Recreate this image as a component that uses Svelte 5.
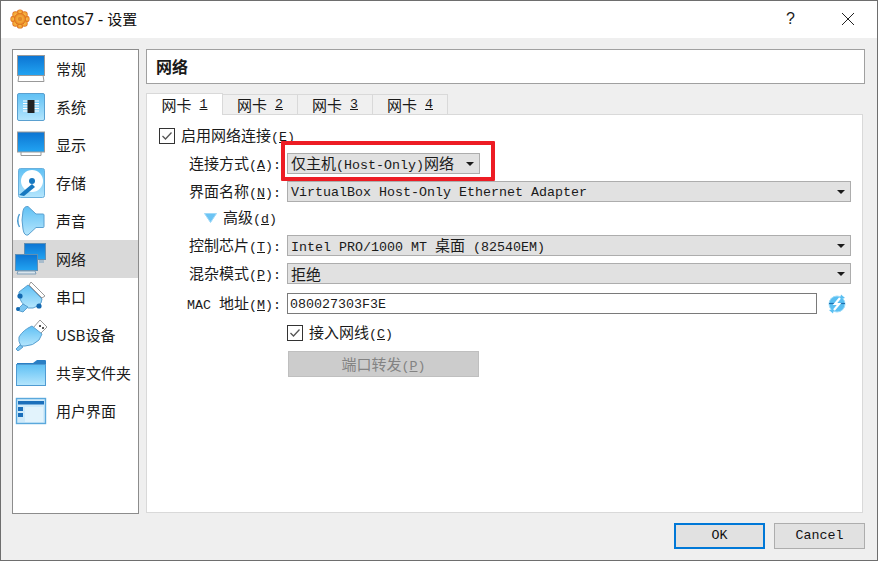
<script>
  const side = ['常规','系统','显示','存储','声音','网络','串口','USB设备','共享文件夹','用户界面'];
  const tabs = ['1','2','3','4'];
  const dy = [2,2,2.5,1,0,0,0,0,0,2];
</script>

{#snippet lab(cjk, key, tail)}<span>{cjk}</span><span class="lat">(<u>{key}</u>){tail}</span>{/snippet}
{#snippet arrow()}<i class="arrow"></i>{/snippet}
{#snippet check()}<svg class="cb" width="16" height="16" viewBox="0 0 16 16"><rect x="0.5" y="0.5" width="15" height="15" fill="#fff" stroke="#333"/><path d="M3.5 8 L6.5 11 L12.5 4.5" fill="none" stroke="#555" stroke-width="1.3"/></svg>{/snippet}

{#snippet icon(i)}
  <svg class="ico" width="32" height="32" viewBox="0 0 32 32">
    <g transform="translate(0,{dy[i]})">
    {#if i === 0}
      <path d="M4 20h24l1 6.5H3z" fill="#fff" stroke="#999"/>
      <rect x="2.5" y="0.5" width="27" height="20" fill="url(#scr)" stroke="#9a9a9a"/>
    {:else if i === 1}
      <rect x="2.5" y="0.5" width="27" height="27" rx="1.5" fill="url(#lb)" stroke="#5aa0d0"/>
      <path d="M8 8h5M8 10.5h5M8 13h5M8 15.5h5M8 18h5M19 8h5M19 10.5h5M19 13h5M19 15.5h5M19 18h5" stroke="#fff" stroke-width="1"/>
      <rect x="12.5" y="7" width="7" height="13" fill="#222"/>
    {:else if i === 2}
      <path d="M6 19h20v5H6z" fill="#fff" stroke="#999"/>
      <rect x="2.5" y="0.5" width="27" height="20" fill="url(#scr)" stroke="#9a9a9a"/>
    {:else if i === 3}
      <rect x="3.5" y="0.5" width="26" height="29" rx="2" fill="url(#lb)" stroke="#6ab0dc"/>
      <circle cx="17" cy="13" r="11" fill="#fff"/>
      <circle cx="17" cy="13" r="3" fill="#1778c0"/>
      <path d="M4 27 L17 16 L20 19 L9 28 Z" fill="#1778c0"/>
    {:else if i === 4}
      <path d="M13 1.5 Q9 1 8 6 Q6 15 8 24 Q9 31 13 30 L21 22.5 H28 q1 0 1-1 V10 q0-1-1-1 H21 Z" fill="url(#lb)" stroke="#5aa0d0"/>
      <path d="M4.5 9q-3.5 6.500 0 13" fill="none" stroke="#4a9ad0" stroke-width="1.4"/>
    {:else if i === 5}
      <rect x="9.500" y="0.500" width="21" height="16" fill="url(#scr)" stroke="#5f8fb4"/>
      <path d="M24 17h5v3h-5z" fill="#a8bccc"/>
      <rect x="0.500" y="11.500" width="22" height="16" fill="url(#scr)" stroke="#5f8fb4"/>
      <path d="M3 28h17l1 3H2z" fill="#d9e4ec" stroke="#7f9fb8"/>
    {:else if i === 6}
      <path d="M16 1 L30 15 L27 17 L14 4 Z" fill="#fff" stroke="#999"/>
      <path d="M13 4 L27 18 L26 22 Q22 26 18 27 L13 27 Q5 22 4 14 L4 11 Z" fill="url(#lb)" stroke="#5aa0d0"/>
      <path d="M8 23 L2 29 L8 31 L13 26 Z" fill="#7cc6f2" stroke="#5aa0d0"/>
      <circle cx="5" cy="15" r="2.6" fill="#1268b0"/><circle cx="24" cy="25" r="2.6" fill="#1268b0"/><circle cx="3" cy="28" r="2" fill="#1268b0"/>
    {:else if i === 7}
      <path d="M18 9 L25 1 L32 8 L25 15 Z" fill="#fff" stroke="#999"/>
      <rect x="24" y="6" width="2" height="2" fill="#555"/><rect x="27" y="8" width="2" height="2" fill="#555"/>
      <path d="M17 7 L27 15 L24 21 Q18 27 10 27 L6 27 Q3 22 4 18 Q8 11 17 7Z" fill="url(#lb)" stroke="#5aa0d0"/>
      <path d="M5 26 L1 30 L3 32 L8 28Z" fill="#7cc6f2" stroke="#5aa0d0"/>
    {:else if i === 8}
      <path d="M2 6h16l4-3h8q1 0 1 1v4H2z" fill="#2a7fc4"/>
      <rect x="1.500" y="7.500" width="29" height="21" fill="url(#lb)" stroke="#4f9bd2"/>
    {:else}
      <rect x="1.500" y="1.500" width="29" height="25" fill="#cfeafa" stroke="#5aa8dc" stroke-width="1.4"/>
      <rect x="3" y="4" width="26" height="3.500" fill="#1b6fbb"/>
      <rect x="3" y="10" width="5" height="4" fill="#1b6fbb"/><rect x="3" y="16" width="5" height="4" fill="#1b6fbb"/>
      <rect x="10" y="10" width="18" height="15" fill="#e2f3fc"/>
    {/if}
    </g>
  </svg>
{/snippet}

<svg class="defs" width="0" height="0">
  <defs>
    <linearGradient id="scr" x1="0" y1="0" x2="0" y2="1"><stop offset="0" stop-color="#0c74d2"/><stop offset="1" stop-color="#22a4f2"/></linearGradient>
    <linearGradient id="lb" x1="0" y1="0" x2="0" y2="1"><stop offset="0" stop-color="#5fc0f4"/><stop offset="1" stop-color="#b5e6fd"/></linearGradient>
    <radialGradient id="fl"><stop offset="0" stop-color="#f9c04c"/><stop offset="0.7" stop-color="#ef9a2e"/><stop offset="1" stop-color="#d9671c"/></radialGradient>
  </defs>
</svg>

<div class="window">
  <header class="titlebar">
    <svg class="logo" width="20" height="20" viewBox="0 0 20 20">
      <g fill="url(#fl)">
        <circle cx="10" cy="3.600" r="3.200"/><circle cx="10" cy="16.400" r="3.200"/><circle cx="3.600" cy="10" r="3.200"/><circle cx="16.400" cy="10" r="3.200"/>
        <circle cx="5.500" cy="5.500" r="3.200"/><circle cx="14.500" cy="5.500" r="3.200"/><circle cx="5.500" cy="14.500" r="3.200"/><circle cx="14.500" cy="14.500" r="3.200"/>
        <circle cx="10" cy="10" r="6"/>
      </g>
      <circle cx="10" cy="10" r="2.200" fill="#e0892a"/>
    </svg>
    <span class="wtitle"><span class="wl">centos7 -{' '}</span>设置</span>
    <span class="help">?</span>
    <svg class="close" width="12" height="12" viewBox="0 0 12 12"><path d="M0 0L12 12M12 0L0 12" stroke="#222" stroke-width="1"/></svg>
  </header>

  <div class="body">
    <nav class="sidebar">
      {#each side as s, i}
        <div class="item" class:sel={i === 5}>
          {@render icon(i)}
          <span>{s}</span>
        </div>
      {/each}
    </nav>

    <main class="main">
      <div class="heading">网络</div>
      <div class="tabs">
        {#each tabs as t, i}
          <div class="tab" class:on={i === 0}><span>网卡</span><span class="lat">{' '}<u>{t}</u></span></div>
        {/each}
      </div>
      <section class="panel">
        <div class="enable">
          {@render check()}
          <span>启用网络连接<span class="lat">(<u>E</u>)</span></span>
        </div>
        <div class="form">
          <div class="row r1">
            <div class="lbl">{@render lab('连接方式','A',':')}</div>
            <div class="mark">
              <div class="combo short"><span class="txt">仅主机<span class="lat">(Host-Only)</span>网络</span>{@render arrow()}</div>
            </div>
          </div>
          <div class="row r2">
            <div class="lbl">{@render lab('界面名称','N',':')}</div>
            <div class="combo"><span class="txt lat">VirtualBox Host-Only Ethernet Adapter</span>{@render arrow()}</div>
          </div>
          <div class="adv">
            <svg width="13" height="10" viewBox="0 0 13 10"><path d="M0.500 0.500H12.500L6.500 9.500Z" fill="#6cc4f4" stroke="#9fd9f8"/></svg>
            <span>高级<span class="lat">(<u>d</u>)</span></span>
          </div>
          <div class="row r3">
            <div class="lbl">{@render lab('控制芯片','T',':')}</div>
            <div class="combo"><span class="txt"><span class="lat">Intel PRO/1000 MT{' '}</span>桌面<span class="lat">{' '}(82540EM)</span></span>{@render arrow()}</div>
          </div>
          <div class="row r4">
            <div class="lbl">{@render lab('混杂模式','P',':')}</div>
            <div class="combo"><span class="txt">拒绝</span>{@render arrow()}</div>
          </div>
          <div class="row r5">
            <div class="lbl"><span class="lat">MAC{' '}</span><span>地址</span><span class="lat">(<u>M</u>):</span></div>
            <div class="field lat">080027303F3E</div>
            <svg class="refresh" width="20" height="20" viewBox="0 0 20 20">
              <circle cx="10" cy="10" r="8" fill="#59bff2" stroke="#9fdcf9"/>
              <path d="M14 0.500L18 4L13 5Z" fill="#59bff2"/>
              <path d="M6 19.500L2 16L7 15Z" fill="#59bff2"/>
              <path d="M2 9.500H18" stroke="#1d6fae" stroke-width="1.200"/>
              <path d="M13 4L8 10H12L7 16" fill="none" stroke="#fff" stroke-width="2.200"/>
            </svg>
          </div>
          <div class="cable">
            {@render check()}
            <span>接入网线<span class="lat">(<u>C</u>)</span></span>
          </div>
          <div class="pf">端口转发<span class="lat">(<u>P</u>)</span></div>
        </div>
      </section>
    </main>
  </div>

  <footer class="foot">
    <div class="btn ok lat">OK</div>
    <div class="btn lat">Cancel</div>
  </footer>
</div>

<style>
  :global(body) { margin: 0; }
  .defs { position: absolute; }
  .window {
    box-sizing: border-box; width: 878px; height: 561px;
    border: 1px solid #6e6e6e; background: #efefef;
    display: flex; flex-direction: column; overflow: hidden;
    font-family: "Noto Sans CJK SC", sans-serif; font-size: 15px; color: #1a1a1a;
  }
  .lat { font-family: "Liberation Mono", monospace; font-size: 13.33px; white-space: pre; }
  u { text-decoration: underline; }
  svg { display: block; flex: none; }

  .titlebar { height: 37px; flex: none; background: #fff; display: flex; align-items: center; padding: 0 23px 2px 9px; box-sizing: border-box; }
  .wtitle { margin-left: 5px; font-size: 15px; color: #111; white-space: pre; }
  .wl { font-family: "Noto Sans", sans-serif; font-size: 16px; }
  .help { margin-left: auto; font-size: 16px; line-height: 20px; padding-top: 1px; font-family: "Liberation Sans", sans-serif; margin-right: 47px; }

  .body { flex: 1; min-height: 0; display: flex; padding: 11px 12px 0 11px; gap: 7px; }
  .sidebar { box-sizing: border-box; width: 127px; height: 465px; border: 1px solid #8c8c8c; background: #fff; flex: none; }
  .item { height: 38px; display: flex; align-items: center; padding-left: 2px; gap: 9px; line-height: 20px; white-space: nowrap; }
  .item.sel { background: #d9d9d9; }

  .main { flex: 1; min-width: 0; display: flex; flex-direction: column; }
  .heading { box-sizing: border-box; height: 35px; flex: none; background: #fff; border: 1px solid #a0a0a0; padding-left: 9px; line-height: 33px; font-weight: 700; font-size: 16px; }
  .tabs { display: flex; margin-top: 9px; height: 22px; flex: none; align-items: flex-start; position: relative; z-index: 1; margin-bottom: -1px; }
  .tab { box-sizing: border-box; height: 21px; margin-top: 1px; width: 75px; border: 1px solid #d9d9d9; border-left: 0; background: #f0f0f0; display: flex; justify-content: center; align-items: center; line-height: 18px; }
  .tab.on { height: 22px; margin-top: 0; width: 77px; background: #fff; border-left: 1px solid #d9d9d9; border-bottom: 0; }
  .panel { box-sizing: border-box; width: 717px; height: 399px; background: #fff; border: 1px solid #d9d9d9; }

  .enable { display: flex; align-items: center; gap: 6px; margin: 13px 0 0 12px; height: 16px; line-height: 16px; }
  .form { display: flex; flex-direction: column; }
  .row { display: flex; align-items: center; height: 21px; }
  .lbl { box-sizing: border-box; width: 140px; padding-right: 6px; flex: none; text-align: right; white-space: nowrap; line-height: 21px; }
  .r1 { margin-top: 9px; }
  .r2 { margin-top: 7px; }
  .r3 { margin-top: 6px; }
  .r4 { margin-top: 7px; }
  .r5 { margin-top: 9px; }
  .combo { box-sizing: border-box; width: 564px; height: 21px; background: #e1e1e1; border: 1px solid #adadad; display: flex; align-items: center; padding: 0 5px 0 3px; }
  .combo.short { width: 193px; }
  .txt { white-space: nowrap; line-height: 19px; flex: 1; }
  .r2 .txt { padding-top: 1px; }
  .arrow { width: 0; height: 0; border-left: 4px solid transparent; border-right: 4px solid transparent; border-top: 4px solid #1a1a1a; flex: none; }
  .mark { position: relative; }
  .mark::after { content: ""; position: absolute; inset: -12px -15px -7px -6px; border: 4px solid #ed1c24; box-sizing: border-box; pointer-events: none; border-radius: 1px; }
  .adv { display: flex; align-items: center; gap: 6px; height: 22px; margin: 5px 0 0 57px; line-height: 22px; }
  .field { box-sizing: border-box; width: 530px; height: 21px; background: #fff; border: 1px solid #7a7a7a; padding: 1px 0 0 2px; line-height: 19px; }
  .refresh { margin-left: 10px; }
  .cable { display: flex; align-items: center; gap: 6px; margin: 11px 0 0 140px; height: 16px; line-height: 16px; }
  .pf { box-sizing: border-box; width: 191px; height: 26px; margin: 10px 0 0 141px; background: #cccccc; border: 1px solid #bfbfbf; color: #838383; text-align: center; line-height: 24px; }

  .foot { flex: none; height: 43px; display: flex; justify-content: flex-end; gap: 9px; padding: 6px 12px 0 0; box-sizing: border-box; }
  .btn { box-sizing: border-box; width: 91px; height: 26px; background: #e1e1e1; border: 1px solid #adadad; text-align: center; line-height: 24px; color: #111; font-size: 13.33px; }
  .btn.ok { border: 2px solid #0078d7; line-height: 22px; }
</style>
